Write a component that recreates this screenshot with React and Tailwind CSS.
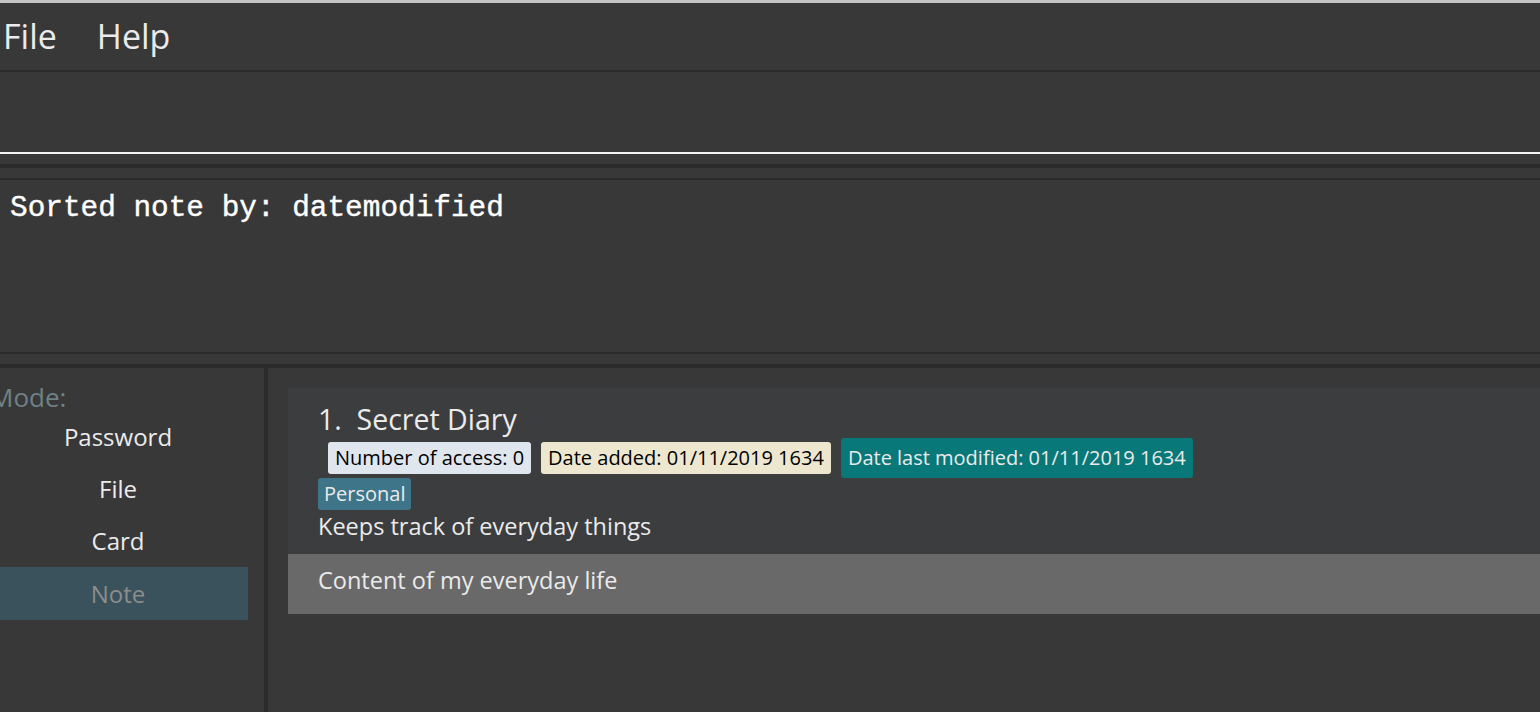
const modes = ['Password', 'File', 'Card', 'Note'];

export default function App() {
  return (
    <div className="w-[1540px] h-[712px] overflow-hidden bg-[#383838] flex flex-col font-['Open_Sans',sans-serif]">
      <div className="h-[3px] bg-[#c4c4c4]" />
      <div className="h-[67px] flex items-center gap-[40px] pl-[3px] text-[34px] text-[#ebebeb]">
        <span>File</span>
        <span>Help</span>
      </div>
      <div className="h-[2px] bg-[#2b2b2b]" />
      <div className="h-[80px]" />
      <div className="h-[2px] bg-[#f4f4f4]" />
      <div className="h-[10px]" />
      <div className="h-[4px] bg-[#2b2b2b]" />
      <div className="h-[10px]" />
      <div className="h-[2px] bg-[#2b2b2b]" />
      <div className="h-[172px] pl-[10px] pt-[7px]">
        <span className="font-['Liberation_Mono',monospace] text-[29.4px] text-white [-webkit-text-stroke:0.4px_white]">
          Sorted note by: datemodified
        </span>
      </div>
      <div className="h-[2px] bg-[#2b2b2b]" />
      <div className="h-[10px]" />
      <div className="h-[4px] bg-[#2b2b2b]" />
      <div className="flex-1 flex">
        <div className="w-[264px] flex flex-col pr-[16px]">
          <div className="h-[15px]" />
          <div className="ml-[-10px] text-[26px] leading-[28px] text-[#6f8185]">Mode:</div>
          {modes.map((m) => (
            <div
              key={m}
              className={
                m === 'Note'
                  ? 'h-[53px] flex items-center justify-center pr-[12px] text-[24px] bg-[#3a525c] text-[#8c8c8c]'
                  : 'h-[52px] flex items-center justify-center pr-[12px] text-[24px] text-[#ebebeb]'
              }
            >
              {m}
            </div>
          ))}
        </div>
        <div className="w-[4px] bg-[#2b2b2b]" />
        <div className="flex-1 pl-[20px] pt-[20px]">
          <div className="bg-[#3c3d3f] pt-[14px] pb-[10px]">
            <div className="pl-[30px] text-[28.5px] leading-[34px] text-[#ebebeb]">
              1.&nbsp;&nbsp;Secret Diary
            </div>
            <div className="pl-[40px] flex items-center gap-[10px] mt-[2px] text-[20px]">
              <span className="bg-[#dfe6ee] text-black rounded-[3px] px-[7px] h-[32px] flex items-center">Number of access: 0</span>
              <span className="bg-[#ede7d0] text-black rounded-[3px] px-[7px] h-[32px] flex items-center">Date added: 01/11/2019 1634</span>
              <span className="bg-[#087878] text-[#ebebeb] rounded-[3px] px-[7px] h-[40px] flex items-center">Date last modified: 01/11/2019 1634</span>
            </div>
            <div className="pl-[30px] flex">
              <span className="bg-[#3e7588] text-[#ebebeb] rounded-[3px] px-[6px] h-[32px] flex items-center text-[20px]">Personal</span>
            </div>
            <div className="pl-[30px] h-[34px] flex items-center text-[23.5px] text-[#ebebeb]">
              Keeps track of everyday things
            </div>
          </div>
          <div className="bg-[#696969] h-[60px] pl-[30px] pb-[6px] flex items-center text-[23.5px] text-[#ebebeb]">
            Content of my everyday life
          </div>
        </div>
      </div>
    </div>
  );
}
